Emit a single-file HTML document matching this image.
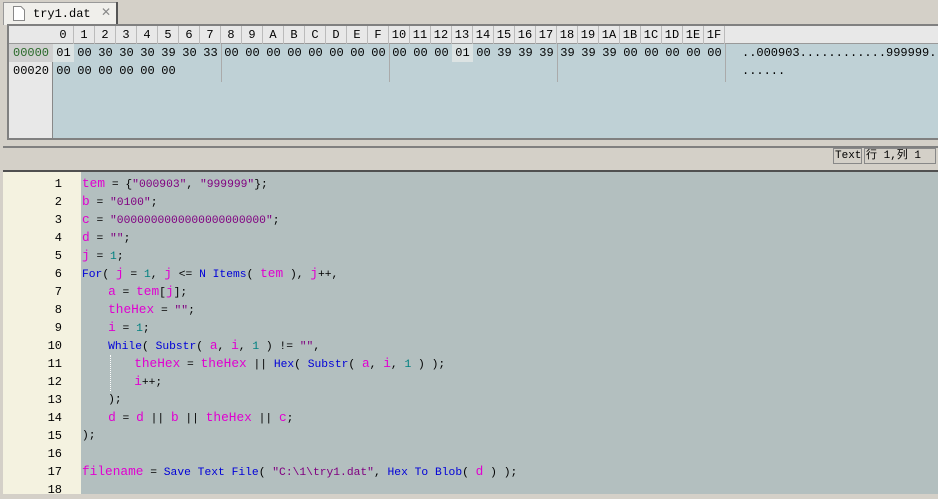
<!DOCTYPE html>
<html><head><meta charset="utf-8"><style>
*{margin:0;padding:0;box-sizing:border-box}
body{width:938px;height:494px;background:#d4d0c8;position:relative;overflow:hidden;font-family:"Liberation Mono","Noto Sans CJK SC",monospace;}
.abs{position:absolute}
.tab{left:3px;top:2px;width:114px;height:23px;background:#f0efeb;border:1px solid #999;border-bottom:none;font-size:12px}
.hex{left:7px;top:24px;width:931px;height:116px;border:2px solid #808080;border-right:none;background:#bfd1d6}
.hdr{left:9px;top:26px;width:929px;height:18px;background:#e8e8e8;border-bottom:1px solid #999}
.off{left:9px;top:44px;width:44px;height:94px;background:#e8e8e8;border-right:1px solid #888}
.c{position:absolute;font-size:12px;text-align:center;width:21px;height:18px;line-height:18px;color:#000}
.hc{border-right:1px solid #bbb}
.status{left:3px;top:146px;width:935px;height:19px;border-top:2px solid #808080;background:#d4d0c8}
.code{left:3px;top:170px;width:935px;height:324px;border-top:2px solid #505050;background:#b3bfbf}
.gut{left:3px;top:172px;width:78px;height:322px;background:#f4f2e0}
.ln{position:absolute;left:30px;width:32px;text-align:right;font-size:12px;line-height:18px;color:#000}
.l{position:absolute;left:82px;font-size:11.3px;line-height:18px;white-space:pre;color:#000}
.v{color:#e000d0;font-size:12.8px}.f{color:#0000d8}.s{color:#800080}.n{color:#008080}
</style></head><body>
<div class="abs tab"><svg class="abs" style="left:9px;top:3px" width="12" height="15"><path d="M.5 .5H8L11.5 4V14.5H.5Z" fill="#fff" stroke="#888"/></svg><span class="abs" style="left:29px;top:4px">try1.dat</span><span class="abs" style="left:97px;top:2px;color:#888;font-family:'Liberation Sans'">✕</span></div>
<div class="abs" style="left:116px;top:2px;width:2px;height:23px;background:#555"></div>
<div class="abs hex"></div>
<div class="abs hdr"></div>
<div class="abs off"></div>
<div id="g"></div>
<div class="abs" style="left:9px;top:44px;width:44px;height:18px;background:#d0d0d0"></div>
<div class="abs" style="left:13px;top:44px;font-size:12px;line-height:18px;color:#2a6a2a">00000</div>
<div class="abs" style="left:13px;top:62px;font-size:12px;line-height:18px">00020</div>
<div class="abs" style="left:742px;top:44px;font-size:12px;line-height:18px">..000903............999999.</div>
<div class="abs" style="left:742px;top:62px;font-size:12px;line-height:18px">......</div>
<div class="abs" style="left:221px;top:44px;width:1px;height:38px;background:#aaa"></div>
<div class="abs" style="left:389px;top:44px;width:1px;height:38px;background:#aaa"></div>
<div class="abs" style="left:557px;top:44px;width:1px;height:38px;background:#aaa"></div>
<div class="abs" style="left:725px;top:44px;width:1px;height:38px;background:#aaa"></div>
<div class="abs status"></div>
<div class="abs" style="left:833px;top:148px;width:29px;height:16px;border:1px solid #888;font-size:11px;line-height:14px;padding-left:1px">Text</div>
<div class="abs" style="left:864px;top:148px;width:72px;height:16px;border:1px solid #888;font-size:11px;line-height:14px;padding-left:1px">行 1,列 1</div>
<div class="abs code"></div>
<div class="abs gut"></div>
<div class="abs" style="left:110px;top:355px;height:36px;border-left:1px dotted #fff"></div>
<div id="code"></div>
<script>
var g=document.getElementById('g'),h='';
var hx='0123456789ABCDEF'.split('');for(var i=0;i<16;i++)hx.push('1'+'0123456789ABCDEF'[i]);
var r1='01 00 30 30 30 39 30 33 00 00 00 00 00 00 00 00 00 00 00 01 00 39 39 39 39 39 39 00 00 00 00 00'.split(' ');
for(i=0;i<32;i++){var x=53+i*21;
h+='<div class="c hc" style="left:'+x+'px;top:26px">'+hx[i]+'</div>';
h+='<div class="c" style="left:'+x+'px;top:44px;'+(i==0||i==19?'background:#dce3e3;':'')+'">'+r1[i]+'</div>';
if(i<6)h+='<div class="c" style="left:'+x+'px;top:62px">00</div>';}
g.innerHTML=h;
var L=[
'<span class="v">tem</span> = {<span class="s">"000903"</span>, <span class="s">"999999"</span>};',
'<span class="v">b</span> = <span class="s">"0100"</span>;',
'<span class="v">c</span> = <span class="s">"0000000000000000000000"</span>;',
'<span class="v">d</span> = <span class="s">""</span>;',
'<span class="v">j</span> = <span class="n">1</span>;',
'<span class="f">For</span>( <span class="v">j</span> = <span class="n">1</span>, <span class="v">j</span> &lt;= <span class="f">N Items</span>( <span class="v">tem</span> ), <span class="v">j</span>++,',
'   <span class="v">a</span> = <span class="v">tem</span>[<span class="v">j</span>];',
'   <span class="v">theHex</span> = <span class="s">""</span>;',
'   <span class="v">i</span> = <span class="n">1</span>;',
'   <span class="f">While</span>( <span class="f">Substr</span>( <span class="v">a</span>, <span class="v">i</span>, <span class="n">1</span> ) != <span class="s">""</span>,',
'      <span class="v">theHex</span> = <span class="v">theHex</span> || <span class="f">Hex</span>( <span class="f">Substr</span>( <span class="v">a</span>, <span class="v">i</span>, <span class="n">1</span> ) );',
'      <span class="v">i</span>++;',
'   );',
'   <span class="v">d</span> = <span class="v">d</span> || <span class="v">b</span> || <span class="v">theHex</span> || <span class="v">c</span>;',
');','',
'<span class="v">filename</span> = <span class="f">Save Text File</span>( <span class="s">"C:\\1\\try1.dat"</span>, <span class="f">Hex To Blob</span>( <span class="v">d</span> ) );',''];
h='';for(i=0;i<18;i++){var y=175+i*18;
h+='<div class="ln" style="top:'+y+'px">'+(i+1)+'</div><div class="l" style="top:'+y+'px">'+L[i].replace(/^( +)/,function(m){return '<span style="display:inline-block;width:'+(m.length*8.7)+'px"></span>'})+'</div>';}
document.getElementById('code').innerHTML=h;
</script>
</body></html>
